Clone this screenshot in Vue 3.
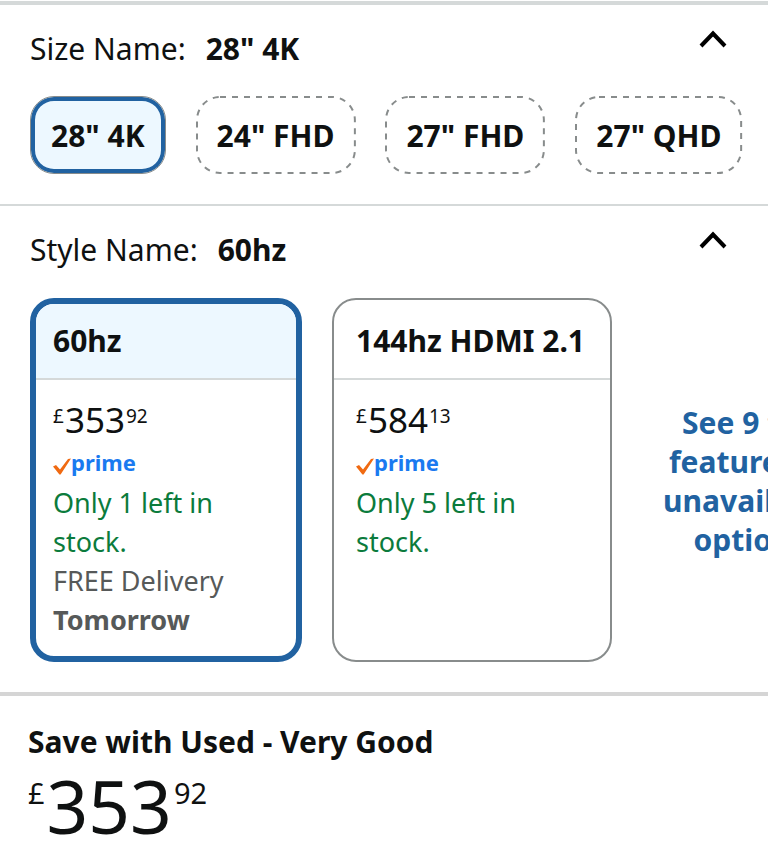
<script setup>
import { ref } from 'vue'

const sizes = ['28" 4K', '24" FHD', '27" FHD', '27" QHD']
const selectedSize = ref(sizes[0])

const styles = [
  { name: '60hz', whole: '353', pence: '92', stock: 'Only 1 left in stock.', delivery: 'Tomorrow' },
  { name: '144hz HDMI 2.1', whole: '584', pence: '13', stock: 'Only 5 left in stock.', delivery: '' }
]
const selectedStyle = ref(styles[0].name)

const sizeOpen = ref(true)
const styleOpen = ref(true)
</script>

<template>
  <main class="page">
    <section class="section section-size">
      <header class="head">
        <h2 class="title">Size Name: <strong>{{ selectedSize }}</strong></h2>
        <button class="toggle" type="button" aria-label="Toggle sizes" :aria-expanded="sizeOpen" @click="sizeOpen = !sizeOpen">
          <svg viewBox="0 0 28 18" width="28" height="18" aria-hidden="true"><path d="M2 16 14 3.500 26 16" /></svg>
        </button>
      </header>
      <div v-if="sizeOpen" class="strip pills">
        <button
          v-for="size in sizes"
          :key="size"
          type="button"
          class="pill"
          :class="{ selected: size === selectedSize }"
          :aria-pressed="size === selectedSize"
          @click="selectedSize = size"
        >
          <svg v-if="size !== selectedSize" class="outline" aria-hidden="true"><rect x="1" y="1" rx="23" /></svg>
          {{ size }}
        </button>
      </div>
    </section>

    <section class="section section-style">
      <header class="head">
        <h2 class="title">Style Name: <strong>{{ selectedStyle }}</strong></h2>
        <button class="toggle" type="button" aria-label="Toggle styles" :aria-expanded="styleOpen" @click="styleOpen = !styleOpen">
          <svg viewBox="0 0 28 18" width="28" height="18" aria-hidden="true"><path d="M2 16 14 3.500 26 16" /></svg>
        </button>
      </header>
      <div v-if="styleOpen" class="strip cards">
        <button
          v-for="item in styles"
          :key="item.name"
          type="button"
          class="card"
          :class="{ selected: item.name === selectedStyle }"
          :aria-pressed="item.name === selectedStyle"
          @click="selectedStyle = item.name"
        >
          <span class="card-name">{{ item.name }}</span>
          <span class="card-body">
            <span class="price"><span class="small">£</span><span>{{ item.whole }}</span><span class="small">{{ item.pence }}</span></span>
            <span class="prime">
              <svg viewBox="0 0 18 18" width="18" height="18" aria-hidden="true"><path d="M0 9.500 3 8 7 12.500 15 2 18 1.500 7.600 17.500 6.400 17.500Z" /></svg>
              <span>prime</span>
            </span>
            <span class="stock">{{ item.stock }}</span>
            <span v-if="item.delivery" class="delivery">FREE Delivery <b>{{ item.delivery }}</b></span>
          </span>
        </button>
        <a class="more" href="#options">
          <span>See 9 top</span>
          <span>features in</span>
          <span>unavailable</span>
          <span>options</span>
        </a>
      </div>
    </section>

    <section class="used">
      <h2 class="used-title">Save with Used - Very Good</h2>
      <p class="price price-large"><span class="small">£</span><span>353</span><span class="small">92</span></p>
    </section>
  </main>
</template>

<style>
body {
  margin: 0;
  background: #fff;
  overflow-x: hidden;
}
</style>

<style scoped>
.page {
  margin-top: 1px;
  border-top: 4px solid #d5d9d9;
  color: #0f1111;
  font-family: "Noto Sans", "Open Sans", sans-serif;
  font-size: 30px;
  line-height: 39px;
  overflow: hidden;
}

button {
  font: inherit;
  color: inherit;
  margin: 0;
  padding: 0;
  border: 0;
  background: none;
  cursor: pointer;
}

.section {
  padding: 24px 0 30px 30px;
}

.section-size {
  border-bottom: 2px solid #d5d9d9;
}

.section-style {
  border-bottom: 4px solid #d5d5d5;
}

.head {
  display: flex;
  justify-content: space-between;
  align-items: flex-start;
  padding-right: 41px;
}

.title {
  display: flex;
  gap: 20px;
  margin: 0;
  font-size: 30px;
  font-weight: 400;
  line-height: 40px;
}

.title strong {
  font-weight: 700;
}

.toggle {
  display: flex;
  padding: 1px 0 20px;
}

.toggle path {
  fill: none;
  stroke: #000;
  stroke-width: 4;
}

.strip {
  display: flex;
  gap: 30px;
}

.pills {
  margin-top: 27px;
}

.pill {
  position: relative;
  flex: none;
  box-sizing: border-box;
  height: 78px;
  padding: 0 21px;
  border-radius: 24px;
  font-weight: 700;
}

.pill.selected {
  padding: 0 20px;
  border: 1px solid #888c8c;
  background: #edf8ff;
  box-shadow: inset 0 0 0 4px #2162a1;
}

.outline {
  position: absolute;
  inset: 0;
  width: 100%;
  height: 100%;
  overflow: visible;
}

.outline rect {
  width: calc(100% - 2px);
  height: calc(100% - 2px);
  fill: none;
  stroke: #888c8c;
  stroke-width: 2;
  stroke-dasharray: 6 6;
}

.cards {
  margin-top: 28px;
}

.card {
  display: flex;
  flex-direction: column;
  flex: none;
  box-sizing: border-box;
  width: 280px;
  min-height: 364px;
  border: 2px solid #888c8c;
  border-radius: 24px;
  overflow: hidden;
  text-align: left;
}

.card.selected {
  width: 272px;
  border: 6px solid #2162a1;
}

.card-name {
  box-sizing: border-box;
  height: 80px;
  padding: 21px 22px 0;
  border-bottom: 2px solid #d5d9d9;
  font-weight: 700;
  line-height: 40px;
  white-space: nowrap;
}

.card.selected .card-name {
  height: 76px;
  padding: 17px 17px 0;
  background: #edf8ff;
}

.card-body {
  display: flex;
  flex-direction: column;
  padding: 18px 22px 16px;
  font-size: 27px;
}

.card.selected .card-body {
  padding: 18px 17px 16px;
}

.price {
  display: flex;
  align-items: flex-start;
  gap: 1px;
  margin: 0;
  color: #0f1111;
  font-size: 35px;
  line-height: 44px;
}

.price .small {
  font-size: 19px;
  line-height: 36px;
}

.prime {
  display: flex;
  align-items: center;
  height: 41px;
  color: #1a7af0;
  font-size: 22px;
  font-weight: 700;
}

.prime svg {
  margin-top: 6px;
  fill: #f06a12;
}

.stock {
  color: #0b7b3c;
}

.delivery {
  color: #565959;
}

.more {
  display: flex;
  flex-direction: column;
  justify-content: center;
  flex: none;
  width: 216px;
  padding-top: 2px;
  color: #2162a1;
  font-weight: 700;
  text-align: center;
  text-decoration: none;
  white-space: nowrap;
}

.used {
  padding: 26px 28px 0;
}

.used-title {
  margin: 0;
  font-size: 30px;
  font-weight: 700;
  line-height: 40px;
}

.price-large {
  gap: 2px;
  font-size: 73px;
  line-height: 88px;
}

.price-large .small {
  font-size: 29px;
  line-height: 62px;
}
</style>
